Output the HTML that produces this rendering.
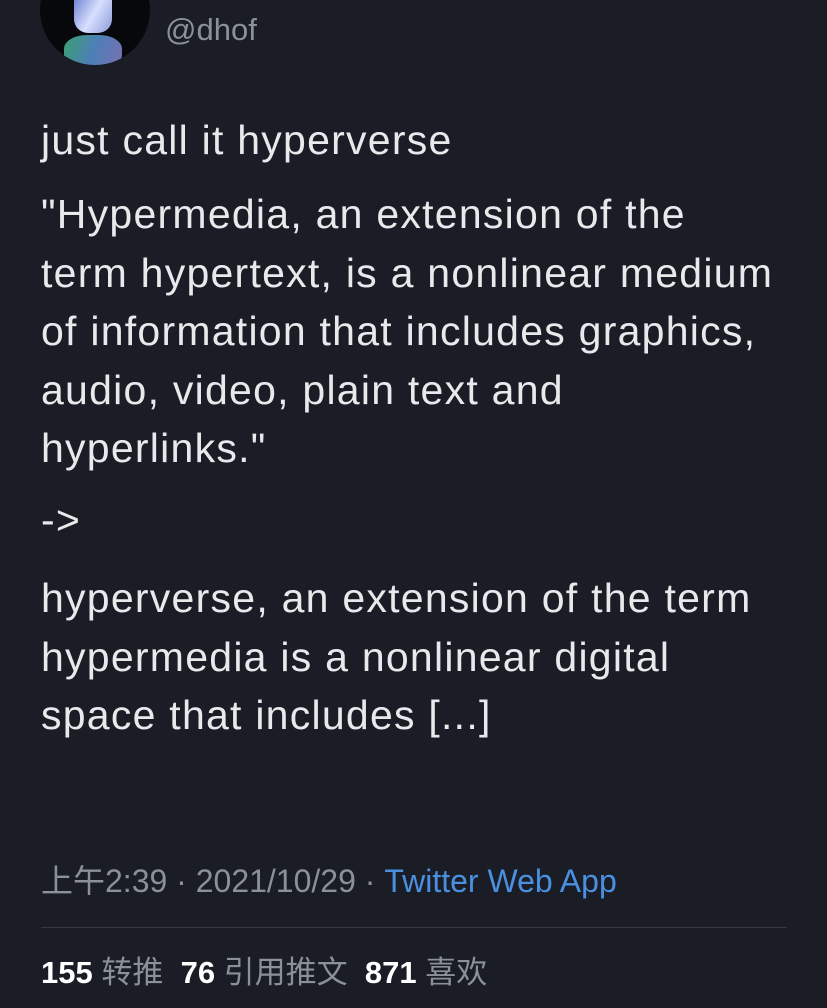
<!DOCTYPE html>
<html><head><meta charset="utf-8"><style>
html,body{margin:0;padding:0;background:#1a1d26;width:827px;height:1008px;overflow:hidden}
body{position:relative;font-family:"Liberation Sans","Noto Sans CJK SC",sans-serif;color:#e7e9ea}
.av{position:absolute;left:40px;top:-45px;width:110px;height:110px;border-radius:50%;background:#07080c;overflow:hidden}
.av .a{position:absolute;left:34px;top:42px;width:38px;height:36px;background:linear-gradient(120deg,#6d7ed0,#d8e0ff 50%,#8a9ad8);border-radius:0 0 14px 14px}
.av .b{position:absolute;left:24px;top:80px;width:58px;height:34px;background:linear-gradient(110deg,#3aa070,#4d7fb8 50%,#7a6fb0);border-radius:40%}
.h{position:absolute;left:165px;top:12px;font-size:31px;color:#8b9199}
.t{position:absolute;left:41px;font-size:41px;letter-spacing:1.25px;line-height:58.5px;white-space:nowrap}
.m{position:absolute;left:41px;top:856px;font-size:32px;color:#8b9199;white-space:nowrap}
.m a{color:#4a8fe0;text-decoration:none}
.d{position:absolute;left:41px;top:927px;width:746px;height:1px;background:#343843}
.s{position:absolute;left:41px;top:947px;font-size:31px;color:#8b9199;white-space:nowrap}
.s b{color:#fff}
</style></head><body>
<div class="av"><div class="a"></div><div class="b"></div></div>
<div class="h">@dhof</div>
<div class="t" style="top:111px">just call it hyperverse</div>
<div class="t" style="top:185px">"Hypermedia, an extension of the<br>term hypertext, is a nonlinear medium<br>of information that includes graphics,<br>audio, video, plain text and<br>hyperlinks."</div>
<div class="t" style="top:491px">-&gt;</div>
<div class="t" style="top:569px">hyperverse, an extension of the term<br>hypermedia is a nonlinear digital<br>space that includes [...]</div>
<div class="m">上午2:39 · 2021/10/29 · <a>Twitter Web App</a></div>
<div class="d"></div>
<div class="s"><b>155</b> 转推&nbsp; <b>76</b> 引用推文&nbsp; <b>871</b> 喜欢</div>
</body></html>
